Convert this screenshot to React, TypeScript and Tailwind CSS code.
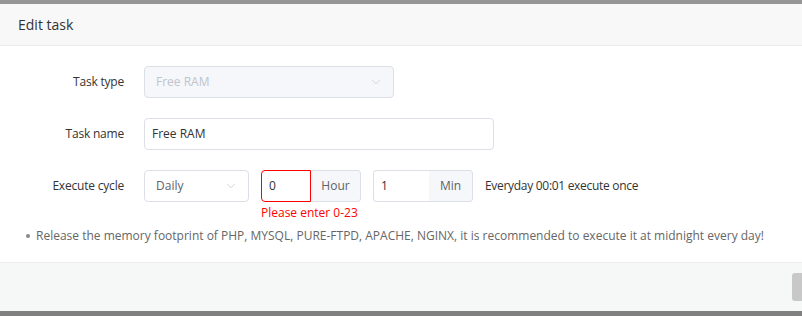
import { ChevronDown } from "lucide-react";

const font = { fontFamily: '"Open Sans", "Noto Sans", sans-serif' };

function Label({ text }: { text: string }) {
  return <div className="w-[124px] shrink-0 text-right text-[12px] tracking-[-0.2px] text-[#333]">{text}</div>;
}

function Select({ value, width, disabled }: { value: string; width: string; disabled?: boolean }) {
  return (
    <div
      className={`flex h-[32px] items-center justify-between rounded-[4px] border border-[#dcdfe6] pl-[11px] pr-[10px] text-[12px] ${width} ${
        disabled ? "bg-[#f5f7fa] text-[#c0c4cc]" : "bg-white text-[#606266]"
      }`}
    >
      <span>{value}</span>
      <ChevronDown size={14} strokeWidth={1.2} className="text-[#c0c4cc]" />
    </div>
  );
}

function UnitInput({ value, unit, inputW, unitW, error }: { value: string; unit: string; inputW: string; unitW: string; error?: boolean }) {
  return (
    <div className="flex h-[32px] text-[12px]">
      <div
        className={`flex items-center rounded-l-[4px] pl-[7px] text-[#333] ${inputW} ${
          error ? "border border-[#f00]" : "border border-r-0 border-[#dcdfe6]"
        }`}
      >
        {value}
      </div>
      <div className={`flex items-center justify-center rounded-r-[4px] border border-l-0 border-[#dcdfe6] bg-[#f5f7fa] text-[#606266] ${unitW} ${error ? "" : "border-l border-l-[#dcdfe6]"}`}>
        {unit}
      </div>
    </div>
  );
}

export default function App() {
  return (
    <div className="flex h-[316px] w-[802px] flex-col overflow-hidden bg-white" style={font}>
      <div className="h-[4px] shrink-0 bg-[#969696]" />
      <div className="flex h-[42px] shrink-0 items-center border-b border-[#eaeaea] bg-[#f8f8f8] pl-[18px] text-[14px] text-[#333]">
        Edit task
      </div>
      <div className="flex flex-1 flex-col pt-[20px]">
        <div className="flex items-center gap-[20px]">
          <Label text="Task type" />
          <Select value="Free RAM" width="w-[250px]" disabled />
        </div>
        <div className="mt-[20px] flex items-center gap-[20px]">
          <Label text="Task name" />
          <div className="flex h-[32px] w-[350px] items-center rounded-[4px] border border-[#dcdfe6] pl-[7px] text-[12px] text-[#333]">
            Free RAM
          </div>
        </div>
        <div className="mt-[20px] flex items-start gap-[20px]">
          <div className="flex h-[32px] items-center">
            <Label text="Execute cycle" />
          </div>
          <div className="flex flex-col">
            <div className="flex items-center">
              <Select value="Daily" width="w-[105px]" />
              <div className="ml-[12px] flex flex-col">
                <UnitInput value="0" unit="Hour" inputW="w-[50px]" unitW="w-[50px]" error />
              </div>
              <div className="ml-[12px]">
                <UnitInput value="1" unit="Min" inputW="w-[56px]" unitW="w-[44px]" />
              </div>
              <span className="ml-[12px] text-[12px] tracking-[-0.3px] text-[#333]">Everyday 00:01 execute once</span>
            </div>
            <div className="ml-[117px] mt-[2px] text-[12px] leading-[18px] text-[#f00]">Please enter 0-23</div>
          </div>
        </div>
        <div className="mt-[5px] flex items-center pl-[26px] text-[12px] text-[#666]">
          <span className="mr-[6px] inline-block h-[4px] w-[4px] rounded-full bg-[#888]" />
          Release the memory footprint of PHP, MYSQL, PURE-FTPD, APACHE, NGINX, it is recommended to execute it at midnight every day!
        </div>
      </div>
      <div className="flex h-[49px] shrink-0 items-center justify-end border-t border-[#eeeeee] bg-[#f6f7f7]">
        <div className="mr-[-20px] h-[28px] w-[30px] rounded-[3px] bg-[#c8c8c8]" />
      </div>
      <div className="h-[5px] shrink-0 bg-[#808080]" />
    </div>
  );
}
